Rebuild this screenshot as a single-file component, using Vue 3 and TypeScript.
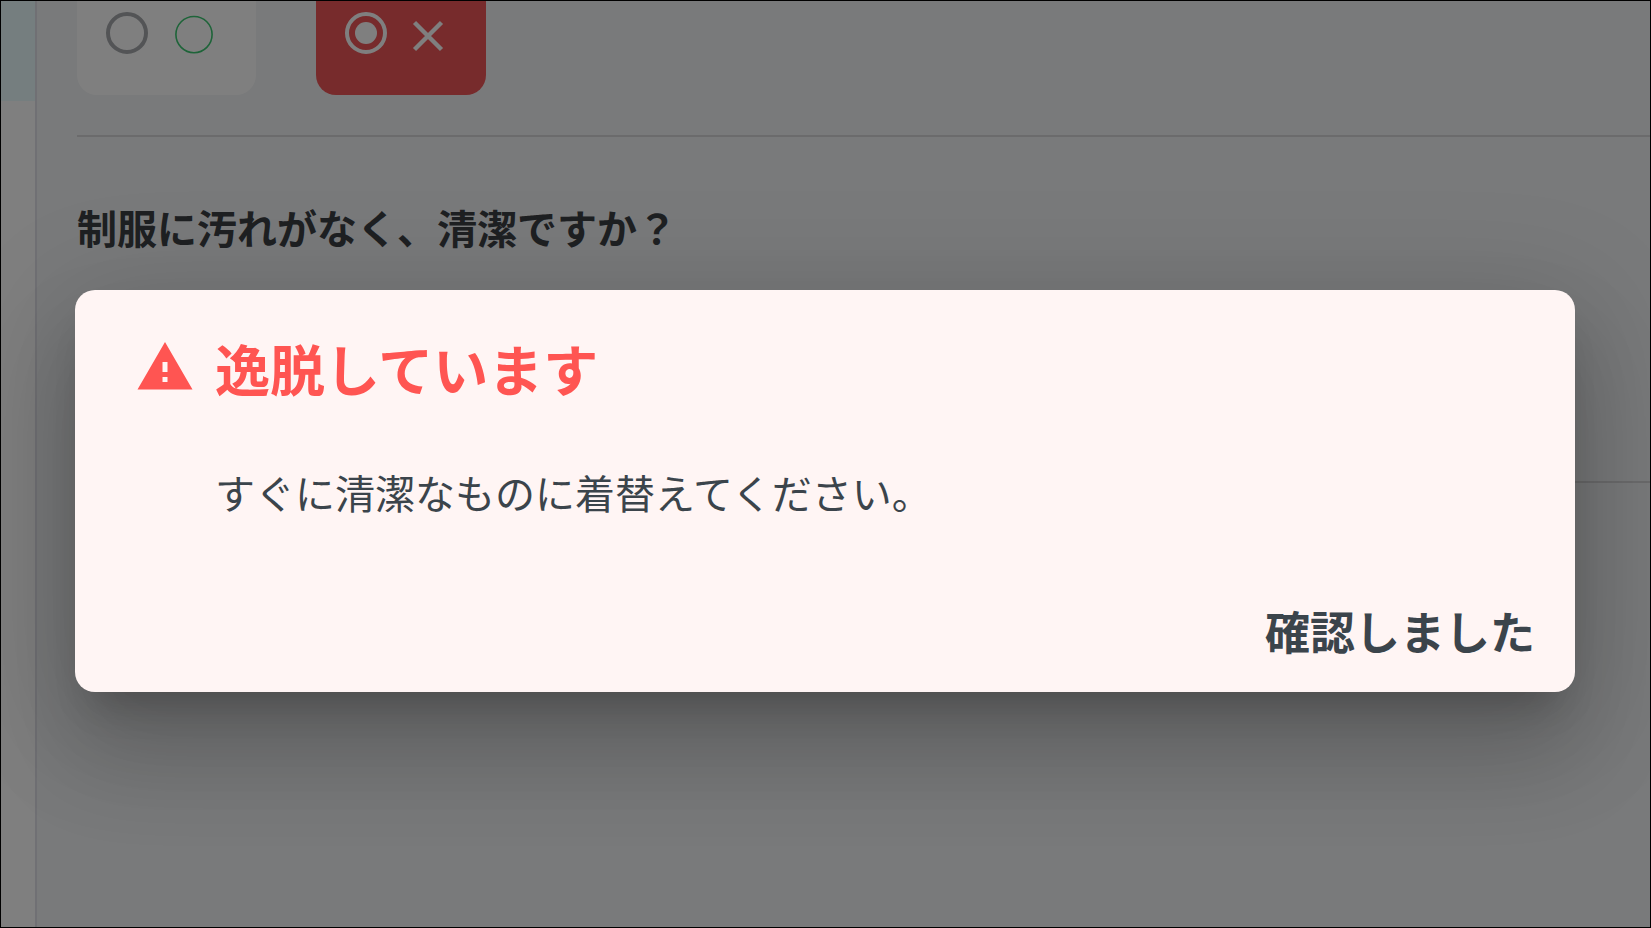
<script setup lang="ts">
import { ref } from 'vue'

type Answer = 'ok' | 'ng'

const choices: { value: Answer; label: string }[] = [
  { value: 'ok', label: '○' },
  { value: 'ng', label: '×' },
]
const answer = ref<Answer>('ng')
const open = ref(true)
</script>

<template>
  <div class="page">
    <aside class="sidebar">
      <div class="current"></div>
    </aside>

    <main class="content">
      <section class="question">
        <div class="choices">
          <label
            v-for="choice in choices"
            :key="choice.value"
            class="choice"
            :class="[choice.value, { selected: answer === choice.value }]"
          >
            <input v-model="answer" type="radio" name="answer" :value="choice.value" :aria-label="choice.label" />
            <svg v-if="choice.value === 'ok'" class="mark" viewBox="0 0 40 40" aria-hidden="true">
              <circle cx="20" cy="20.6" r="18.1" fill="none" stroke="currentColor" stroke-width="1.6" />
            </svg>
            <svg v-else class="mark" viewBox="0 0 40 40" aria-hidden="true">
              <path d="M6.5 8.5l27 27M33.5 8.5l-27 27" fill="none" stroke="currentColor" stroke-width="4.4" />
            </svg>
          </label>
        </div>
      </section>

      <section class="question second">
        <h2>制服に汚れがなく、清潔ですか？</h2>
      </section>
    </main>

    <div v-if="open" class="overlay">
      <div class="dialog" role="alertdialog" aria-modal="true" aria-labelledby="dialog-title" aria-describedby="dialog-text">
        <header class="dialog-head">
          <svg class="warning" viewBox="0 0 24 24" aria-hidden="true">
            <path fill="currentColor" d="M1 21h22L12 2 1 21zm12-3h-2v-2h2v2zm0-4h-2v-4h2v4z" />
          </svg>
          <h1 id="dialog-title">逸脱しています</h1>
        </header>
        <p id="dialog-text">すぐに清潔なものに着替えてください。</p>
        <footer class="actions">
          <button type="button" @click="open = false">確認しました</button>
        </footer>
      </div>
    </div>
  </div>
</template>

<style>
body {
  margin: 0;
}
</style>

<style scoped>
.page {
  position: relative;
  display: flex;
  box-sizing: border-box;
  min-height: 100vh;
  overflow: hidden;
  border: 1px solid #000;
  background: #f2f4f6;
  color: #3c4045;
  font-family: "Noto Sans CJK JP", sans-serif;
}

.sidebar {
  flex: none;
  width: 34px;
  border-right: 2px solid #e0e0e8;
  background: #fff;
}

.current {
  height: 100px;
  background: #eafcfe;
}

.content {
  flex: 1;
  min-width: 0;
  padding-left: 40px;
}

.question {
  border-bottom: 2px solid #d6d7d9;
}

.choices {
  display: flex;
  gap: 60px;
  padding-bottom: 40px;
}

.choice {
  display: flex;
  box-sizing: border-box;
  height: 94px;
  gap: 26px;
  padding: 11px 42px 0 29px;
  border-radius: 0 0 20px 20px;
  background: #fff;
  color: #3cc872;
}

.choice.ng {
  gap: 21px;
  padding-right: 38px;
}

.choice.ng.selected {
  background: #ee5658;
  color: #fff;
}

.choice input {
  display: grid;
  flex: none;
  place-content: center;
  box-sizing: border-box;
  width: 42px;
  height: 42px;
  margin: 0;
  border: 4px solid #a6a9ac;
  border-radius: 50%;
  color: inherit;
  appearance: none;
}

.choice input:checked {
  border-color: currentColor;
}

.choice input:checked::before {
  width: 22px;
  height: 22px;
  border-radius: 50%;
  background: currentColor;
  content: "";
}

.mark {
  width: 40px;
  height: 40px;
  margin-top: 2px;
}

.second {
  box-sizing: border-box;
  min-height: 346px;
  padding-top: 60px;
}

h2 {
  margin: 0;
  font-size: 40px;
  font-weight: 700;
  line-height: 60px;
}

.overlay {
  position: absolute;
  inset: 0;
  padding: 289px 75px 0 74px;
  background: rgba(0, 0, 0, 0.5);
}

.dialog {
  padding: 41px 40px 25px 60px;
  border-radius: 20px;
  background: #fff5f4;
  box-shadow:
    0 28px 38px -18px rgba(0, 0, 0, 0.2),
    0 60px 95px 8px rgba(0, 0, 0, 0.14),
    0 23px 115px 20px rgba(0, 0, 0, 0.12);
}

.dialog-head {
  display: flex;
  gap: 20px;
  align-items: center;
  color: #ff5552;
}

.warning {
  flex: none;
  width: 60px;
  height: 60px;
}

h1 {
  margin: 0;
  font-size: 55px;
  font-weight: 700;
  line-height: 72px;
}

p {
  margin: 59px 0 0 80px;
  color: #3b444b;
  font-size: 40px;
  line-height: 60px;
}

.actions {
  display: flex;
  justify-content: flex-end;
  margin-top: 73px;
}

button {
  padding: 0;
  border: 0;
  background: none;
  color: #3b444b;
  font-family: inherit;
  font-size: 45px;
  font-weight: 700;
  line-height: 72px;
  cursor: pointer;
}
</style>
